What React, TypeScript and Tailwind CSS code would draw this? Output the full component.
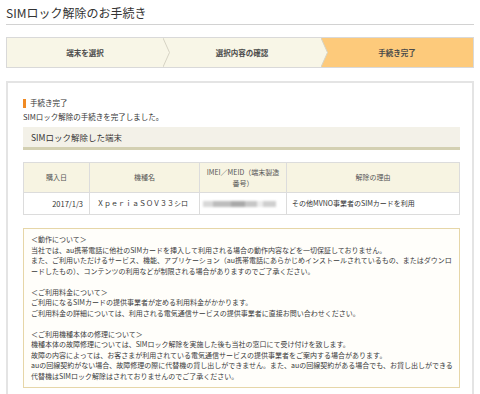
import React from 'react'

const steps = [
  { label: '端末を選択', width: 'w-[156px]', active: false, arrow: true },
  { label: '選択内容の確認', width: 'w-[158px]', active: false, arrow: true },
  { label: '手続き完了', width: 'flex-1', active: true, arrow: false },
]

const notices = [
  [
    '＜動作について＞',
    '当社では、au携帯電話に他社のSIMカードを挿入して利用される場合の動作内容などを一切保証しておりません。',
    'また、ご利用いただけるサービス、機能、アプリケーション（au携帯電話にあらかじめインストールされているもの、またはダウンロ',
    'ードしたもの）、コンテンツの利用などが制限される場合がありますのでご了承ください。',
  ],
  [
    '＜ご利用料金について＞',
    'ご利用になるSIMカードの提供事業者が定める利用料金がかかります。',
    'ご利用料金の詳細については、利用される電気通信サービスの提供事業者に直接お問い合わせください。',
  ],
  [
    '＜ご利用機種本体の修理について＞',
    '機種本体の故障修理については、SIMロック解除を実施した後も当社の窓口にて受け付けを致します。',
    '故障の内容によっては、お客さまが利用されている電気通信サービスの提供事業者をご案内する場合があります。',
    'auの回線契約がない場合、故障修理の際に代替機の貸し出しができません。また、auの回線契約がある場合でも、お貸し出しができる',
    '代替機はSIMロック解除はされておりませんのでご了承ください。',
  ],
]

export default function App() {
  return (
    <div className="w-[480px] h-[394px] overflow-hidden bg-white px-[6px] pt-[6px] font-['Noto_Sans_CJK_JP','Liberation_Sans',sans-serif] text-[#333]">
      {/* タイトル */}
      <h1 className="text-[12px] leading-[14px] pb-[4px] border-b border-[#d2d2d2] text-[#333]">
        SIMロック解除のお手続き
      </h1>

      {/* ステップ */}
      <div className="mt-[12px] h-[31px] flex border border-[#d9d9d9]">
        {steps.map(step => (
          <div
            key={step.label}
            className={`relative ${step.width} flex items-center justify-center text-[7.5px] font-bold text-[#4a4a4a] ${
              step.active ? 'bg-[#fdca7b]' : 'bg-[#f8f6e7]'
            }`}
          >
            {step.label}
            {step.arrow && (
              <svg
                className="absolute right-[-7px] top-0 h-full w-[7px] z-10"
                viewBox="0 0 7 29"
                preserveAspectRatio="none"
              >
                <polygon points="0,0 6.5,14.5 0,29" fill="#f8f6e7" />
                <polyline points="0,0 6.5,14.5 0,29" fill="none" stroke="#d6d3c4" strokeWidth="1" />
              </svg>
            )}
          </div>
        ))}
      </div>

      {/* メインパネル */}
      <div className="mt-[13px] border-2 border-[#e4e4e4] pl-[15px] pr-[12px] pt-[15px] pb-[20px]">
        <div className="flex items-center h-[10px]">
          <span className="w-[3px] h-[9px] bg-[#f08a24]" />
          <span className="ml-[4px] text-[7.5px] leading-[10px]">手続き完了</span>
        </div>
        <p className="mt-[4px] text-[7.5px] leading-[10px]">SIMロック解除の手続きを完了しました。</p>

        <div className="mt-[5px] h-[23px] flex items-center pl-[8px] bg-[#f3f1e8] border-b-[3px] border-[#d3d0b2] text-[8.5px]">
          SIMロック解除した端末
        </div>

        <table className="mt-[12px] w-full border-collapse text-[7px] leading-[11px]">
          <thead>
            <tr className="h-[30px] bg-[#f7f4e2] text-[#555]">
              <th className="w-[66px] border border-[#dcdcdc] font-normal">購入日</th>
              <th className="w-[110px] border border-[#dcdcdc] font-normal">機種名</th>
              <th className="w-[87px] border border-[#dcdcdc] font-normal">
                IMEI／MEID（端末製造
                <br />
                番号）
              </th>
              <th className="border border-[#dcdcdc] font-normal">解除の理由</th>
            </tr>
          </thead>
          <tbody>
            <tr className="h-[22px]">
              <td className="border border-[#dcdcdc] text-right pr-[6px] text-[7.5px]">2017/1/3</td>
              <td className="border border-[#dcdcdc] pl-[7px]">ＸｐｅｒｉａＳＯＶ３３シロ</td>
              <td className="border border-[#dcdcdc] pl-[3px]">
                {/* 製造番号はぼかし */}
                <div className="flex h-[6px] w-[73px] blur-[1px]">
                  <span className="w-[10px] bg-[#d8d8d8]" />
                  <span className="w-[18px] bg-[#bdbdbd]" />
                  <span className="w-[14px] bg-[#a9a9a9]" />
                  <span className="w-[12px] bg-[#c6c6c6]" />
                  <span className="w-[6px] bg-[#ececec]" />
                  <span className="w-[13px] bg-[#cfcfcf]" />
                </div>
              </td>
              <td className="border border-[#dcdcdc] pl-[5px]">その他MVNO事業者のSIMカードを利用</td>
            </tr>
          </tbody>
        </table>

        <div className="mt-[13px] border border-[#e6d6a8] bg-[#fffefa] px-[7px] pt-[5px] pb-[6px] text-[7px] leading-[10.5px] text-[#3a3a3a]">
          {notices.map((group, i) => (
            <div key={i} className={i > 0 ? 'mt-[10.5px]' : ''}>
              {group.map(line => (
                <div key={line} className="whitespace-nowrap">
                  {line}
                </div>
              ))}
            </div>
          ))}
        </div>
      </div>
    </div>
  )
}
